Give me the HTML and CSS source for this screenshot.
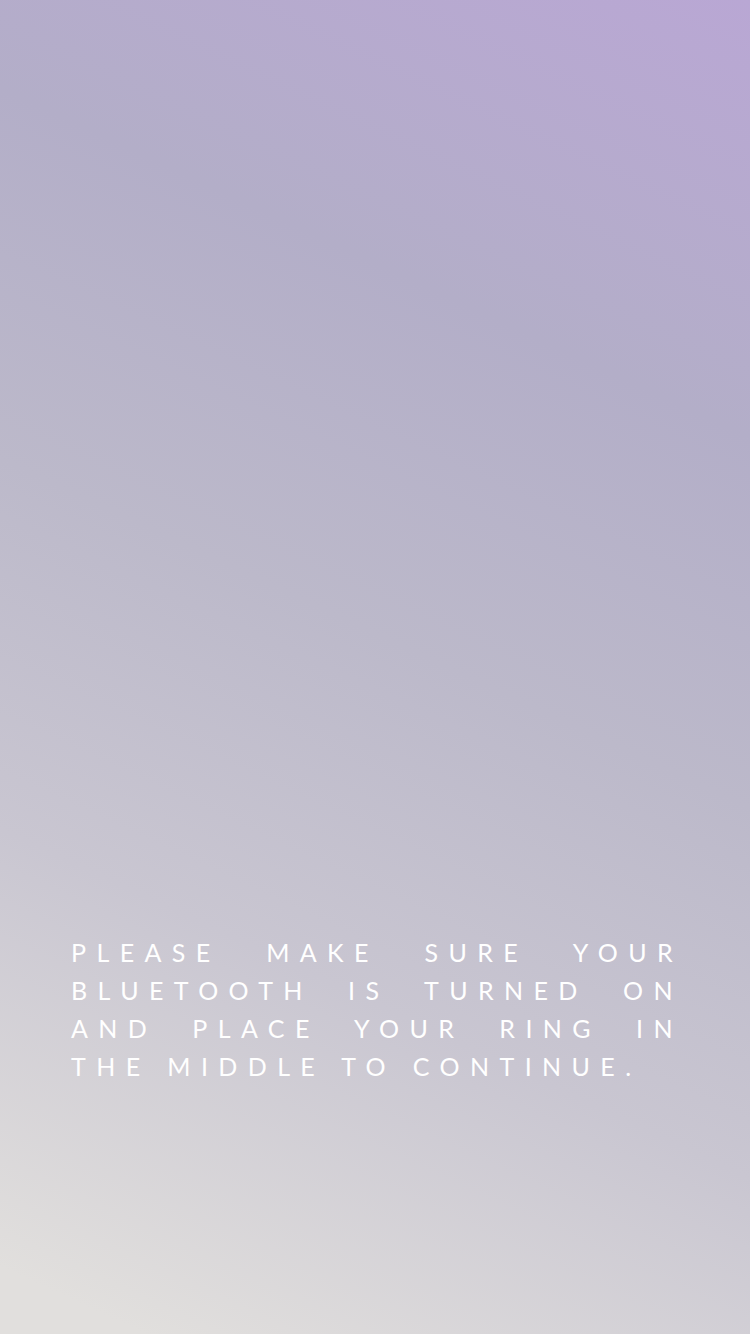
FILE: index.html
```html
<!DOCTYPE html>
<html lang="en">
<head>
<meta charset="utf-8">
<title>Connect your ring</title>
<link rel="stylesheet" href="styles.css">
</head>
<body>
<main class="screen">
  <p class="instructions">PLEASE MAKE SURE YOUR BLUETOOTH IS TURNED ON AND PLACE YOUR RING IN THE MIDDLE TO CONTINUE.</p>
</main>
</body>
</html>
```
FILE: styles.css
```css
html, body {
  margin: 0;
  padding: 0;
}
.screen {
  box-sizing: border-box;
  width: 750px;
  height: 1334px;
  padding: 933px 0 0 71px;
  background: linear-gradient(205deg, #b9a7d4 0%, #b3aec8 26%, #bcb9ca 48%, #c9c6d1 70%, #e1dfdd 96%);
  overflow: hidden;
}
.instructions {
  margin: 0;
  width: 612px;
  font-family: Lato, "Open Sans", sans-serif;
  font-size: 25px;
  font-weight: 400;
  line-height: 38px;
  letter-spacing: 10.4px;
  color: #ffffff;
  text-align: justify;
  text-align-last: left;
}
```
